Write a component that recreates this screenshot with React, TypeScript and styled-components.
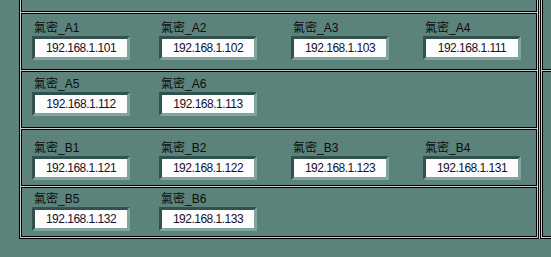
import React from 'react';
import styled, { createGlobalStyle } from 'styled-components';

const GlobalStyle = createGlobalStyle`
    html, body {
        margin: 0;
        padding: 0;
        background: #5b837c;
        overflow: hidden;
    }
`;

interface Field {
    name: string;
    ip: string;
}

interface RowData {
    height: number;
    pad: number;
    fields: Field[];
}

const rows: RowData[] = [
    { height: 57, pad: 6, fields: [
        { name: '氣密_A1', ip: '192.168.1.101' },
        { name: '氣密_A2', ip: '192.168.1.102' },
        { name: '氣密_A3', ip: '192.168.1.103' },
        { name: '氣密_A4', ip: '192.168.1.111' },
    ] },
    { height: 57, pad: 4, fields: [
        { name: '氣密_A5', ip: '192.168.1.112' },
        { name: '氣密_A6', ip: '192.168.1.113' },
    ] },
    { height: 57, pad: 10, fields: [
        { name: '氣密_B1', ip: '192.168.1.121' },
        { name: '氣密_B2', ip: '192.168.1.122' },
        { name: '氣密_B3', ip: '192.168.1.123' },
        { name: '氣密_B4', ip: '192.168.1.131' },
    ] },
    { height: 50, pad: 3, fields: [
        { name: '氣密_B5', ip: '192.168.1.132' },
        { name: '氣密_B6', ip: '192.168.1.133' },
    ] },
];

export default function App() {
    return (<Screen>
        <GlobalStyle />
        <PanelGroup>
            <Panel $width={520}>
                <Row $height={12} $pad={0} $cut />
                { rows.map((r, i) => <Row key={i} $height={r.height} $pad={r.pad}>
                    { r.fields.map(f => <Cell key={f.name}>
                        <Label>{ f.name }</Label>
                        <Frame><Value>{ f.ip }</Value></Frame>
                    </Cell>) }
                </Row>) }
            </Panel>
            <Panel $width={40}>
                <Row $height={70} $pad={0} $cut />
                <Row $height={166} $pad={0} />
            </Panel>
        </PanelGroup>
    </Screen>);
}

const Screen = styled.div`
    width: 551px;
    height: 257px;
    overflow: hidden;
    display: flex;
    align-items: flex-start;
    padding-left: 19px;
    box-sizing: border-box;
`;

const PanelGroup = styled.div`
    display: flex;
    gap: 1px;
    background: #c9cdcc;
`;

const Panel = styled.div<{ $width: number }>`
    width: ${props => props.$width}px;
    flex-shrink: 0;
    box-sizing: border-box;
    border: 1px solid #000;
    border-top: none;
    padding: 0 1px 1px;
    background: #c9cdcc;
    display: flex;
    flex-direction: column;
    gap: 1px;
`;

const Row = styled.div<{ $height: number; $pad: number; $cut?: boolean }>`
    height: ${props => props.$height}px;
    box-sizing: border-box;
    border: 1px solid #000;
    ${props => props.$cut ? 'border-top: none;' : ''}
    background: #5b837c;
    padding: ${props => props.$pad}px 0 0 10px;
    display: grid;
    grid-template-columns: 127px 132px 132px 98px;
    align-content: start;
`;

const Cell = styled.div`
    display: flex;
    flex-direction: column;
`;

const Label = styled.div`
    margin-left: 2px;
    height: 16px;
    line-height: 16px;
    font-family: "Liberation Sans", "Noto Sans CJK TC", sans-serif;
    font-size: 12px;
    color: #0c0c0c;
    white-space: nowrap;
`;

const Frame = styled.div`
    width: 98px;
    height: 24px;
    box-sizing: border-box;
    border: 3px solid;
    border-color: #30514c #80a59e #80a59e #30514c;
`;

const Value = styled.div`
    height: 18px;
    line-height: 18px;
    background: #fdfdfd;
    text-align: center;
    font-family: "Liberation Sans", sans-serif;
    font-size: 12px;
    letter-spacing: -0.5px;
    color: #16102a;
`;
